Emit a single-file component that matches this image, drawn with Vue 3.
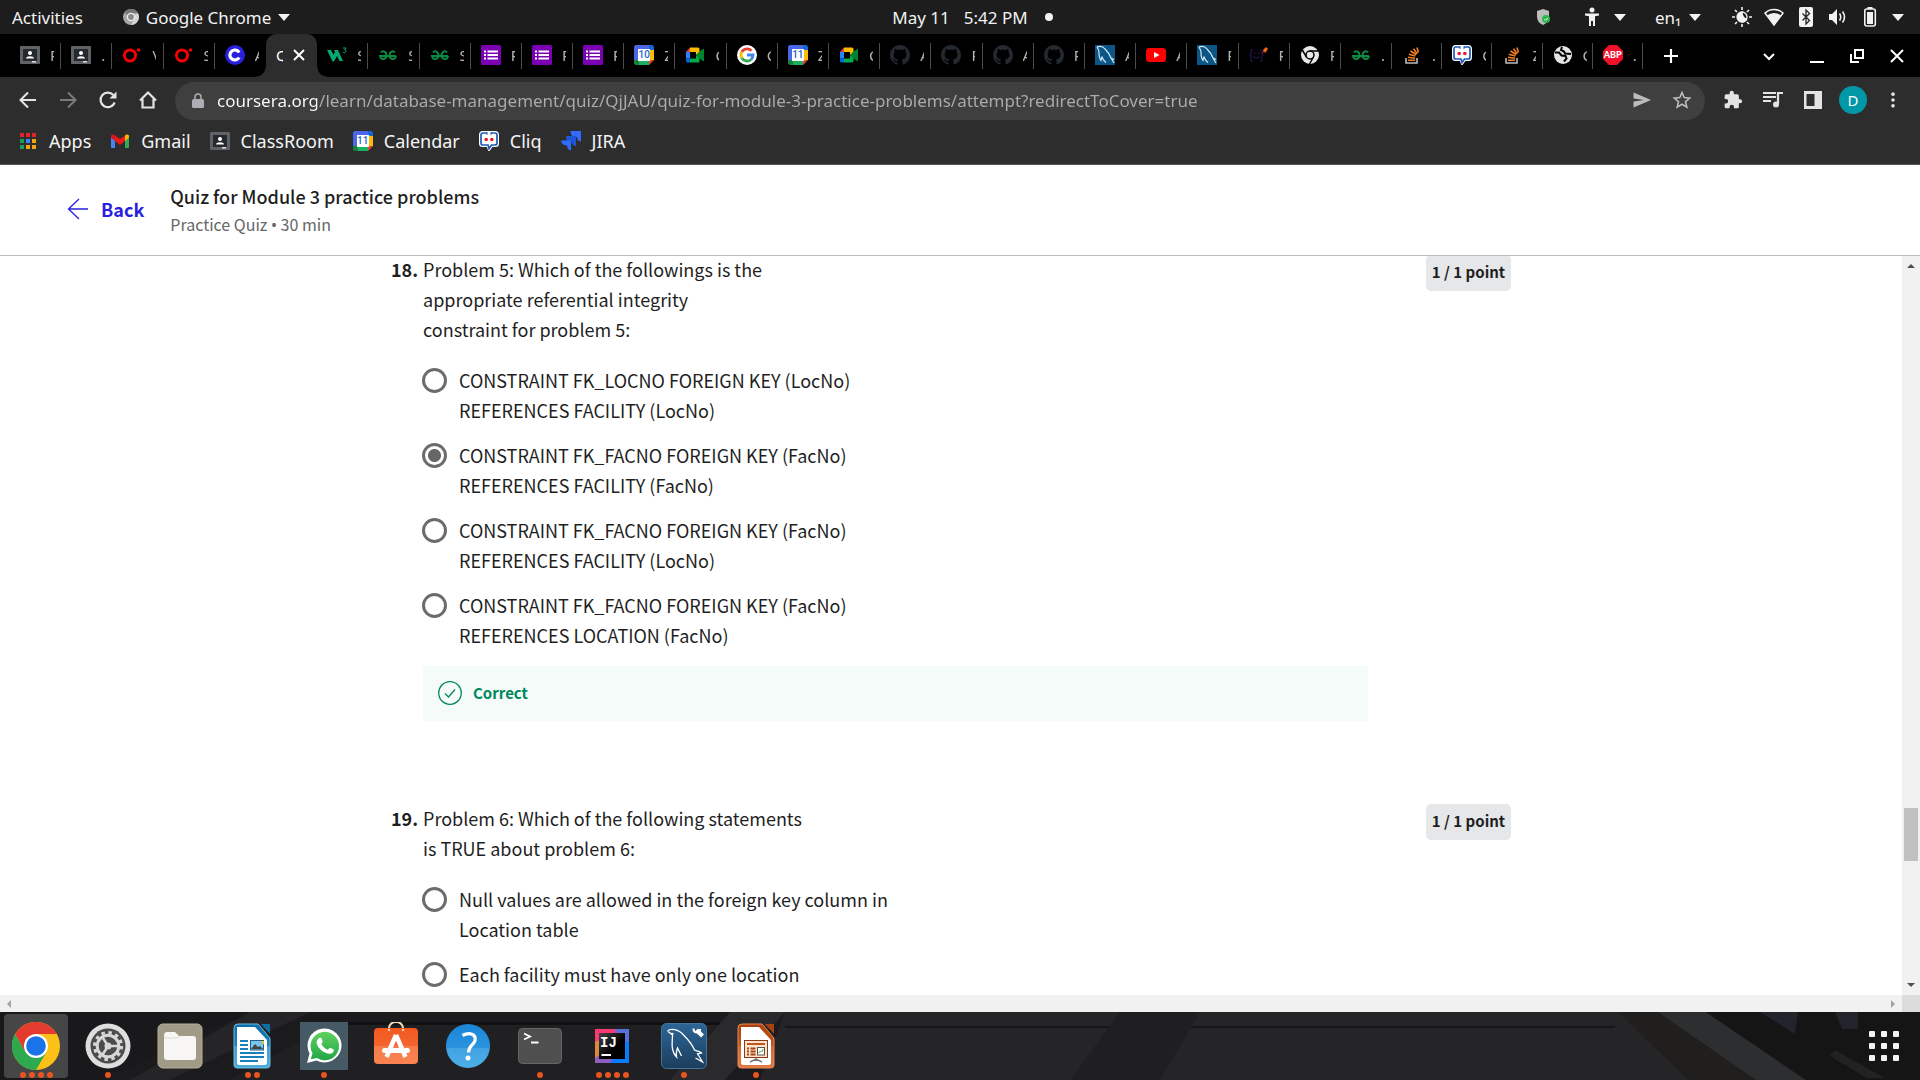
<script setup>
import { ref } from 'vue'

const tabs = [
  { icon: 'classroom', title: 'P' },
  { icon: 'classroom', title: '.' },
  { icon: 'oracle', title: 'V' },
  { icon: 'oracle', title: 'S' },
  { icon: 'coursera', title: 'A' },
  { title: 'Quiz', active: true },
  { icon: 'w3', title: 'S' },
  { icon: 'gfg', title: 'S' },
  { icon: 'gfg', title: 'S' },
  { icon: 'forms', title: 'P' },
  { icon: 'forms', title: 'P' },
  { icon: 'forms', title: 'P' },
  { icon: 'cal10', title: 'Z' },
  { icon: 'meet', title: 'C' },
  { icon: 'google', title: 'C' },
  { icon: 'cal11', title: 'Z' },
  { icon: 'meet', title: 'C' },
  { icon: 'github', title: 'A' },
  { icon: 'github', title: 'P' },
  { icon: 'github', title: 'A' },
  { icon: 'github', title: 'P' },
  { icon: 'mysql', title: 'A' },
  { icon: 'youtube', title: 'A' },
  { icon: 'mysql', title: 'P' },
  { icon: 'smile', title: 'P' },
  { icon: 'chromegray', title: 'P' },
  { icon: 'gfg', title: '.' },
  { icon: 'stack', title: '.', narrow: true },
  { icon: 'cliq', title: 'C', narrow: true },
  { icon: 'stack', title: 'Z', narrow: true },
  { icon: 'globe', title: 'C', narrow: true },
  { icon: 'abp', title: '.', narrow: true }
]

const bookmarks = [
  { icon: 'apps', label: 'Apps' },
  { icon: 'gmail', label: 'Gmail' },
  { icon: 'classroom', label: 'ClassRoom' },
  { icon: 'cal11', label: 'Calendar' },
  { icon: 'cliq', label: 'Cliq' },
  { icon: 'jira', label: 'JIRA' }
]

// Lettering laid over an icon's shape
const lettering = { cal10: '10', cal11: '11', abp: 'ABP', intellij: 'IJ' }

const dock = [
  { icon: 'chrome', name: 'Google Chrome', windows: 4, active: true },
  { icon: 'settings', name: 'Settings', windows: 1 },
  { icon: 'files', name: 'Files', windows: 0 },
  { icon: 'writer', name: 'LibreOffice Writer', windows: 2 },
  { icon: 'whatsapp', name: 'WhatsApp', windows: 1 },
  { icon: 'software', name: 'Ubuntu Software', windows: 0 },
  { icon: 'help', name: 'Help', windows: 0 },
  { icon: 'terminal', name: 'Terminal', windows: 1 },
  { icon: 'intellij', name: 'IntelliJ IDEA', windows: 4 },
  { icon: 'workbench', name: 'MySQL Workbench', windows: 1 },
  { icon: 'impress', name: 'LibreOffice Impress', windows: 1 }
]

const url = ref('coursera.org/learn/database-management/quiz/QjJAU/quiz-for-module-3-practice-problems/attempt?redirectToCover=true')

const questions = ref([
  {
    number: 18,
    text: 'Problem 5: Which of the followings is the\nappropriate referential integrity\nconstraint for problem 5:',
    points: '1 / 1 point',
    answer: 1,
    correct: true,
    options: [
      'CONSTRAINT FK_LOCNO FOREIGN KEY (LocNo)\nREFERENCES FACILITY (LocNo)',
      'CONSTRAINT FK_FACNO FOREIGN KEY (FacNo)\nREFERENCES FACILITY (FacNo)',
      'CONSTRAINT FK_FACNO FOREIGN KEY (FacNo)\nREFERENCES FACILITY (LocNo)',
      'CONSTRAINT FK_FACNO FOREIGN KEY (FacNo)\nREFERENCES LOCATION (FacNo)'
    ]
  },
  {
    number: 19,
    text: 'Problem 6: Which of the following statements\nis TRUE about problem 6:',
    points: '1 / 1 point',
    answer: null,
    correct: false,
    options: [
      'Null values are allowed in the foreign key column in\nLocation table',
      'Each facility must have only one location'
    ]
  }
])
</script>

<template>
  <div class="desktop">
    <svg class="sprite" aria-hidden="true">
      <defs>
        <linearGradient id="g-writer" x1="0" y1="0" x2="0" y2="1"><stop offset="0" stop-color="#0f6ea8" /><stop offset=".5" stop-color="#1b7fbc" /><stop offset=".5" stop-color="#3f9fd3" /><stop offset="1" stop-color="#4fabdb" /></linearGradient>
        <linearGradient id="g-impress" x1="0" y1="0" x2="0" y2="1"><stop offset="0" stop-color="#a8430f" /><stop offset=".5" stop-color="#c4531a" /><stop offset=".5" stop-color="#d9662b" /><stop offset="1" stop-color="#e27a45" /></linearGradient>
        <linearGradient id="g-help" x1="0" y1="0" x2="0" y2="1"><stop offset="0" stop-color="#1a86d9" /><stop offset=".54" stop-color="#2b93df" /><stop offset=".54" stop-color="#41a2e3" /><stop offset="1" stop-color="#4dafe8" /></linearGradient>
        <linearGradient id="g-soft" x1="0" y1="0" x2="0" y2="1"><stop offset="0" stop-color="#f2581f" /><stop offset=".5" stop-color="#f4652f" /><stop offset=".5" stop-color="#f77b4a" /><stop offset="1" stop-color="#f98352" /></linearGradient>
        <linearGradient id="g-wa" x1="0" y1="0" x2="0" y2="1"><stop offset="0" stop-color="#5fd15f" /><stop offset="1" stop-color="#22a648" /></linearGradient>
        <linearGradient id="g-wb" x1="0" y1="0" x2="0" y2="1"><stop offset="0" stop-color="#2c6597" /><stop offset="1" stop-color="#1c3e5c" /></linearGradient>
        <linearGradient id="g-ij" x1="0" y1="0" x2="1" y2="1"><stop offset="0" stop-color="#444" /><stop offset=".6" stop-color="#000" /></linearGradient>
      </defs>

      <symbol id="i-classroom" viewBox="0 0 20 20"><rect y="1" width="20" height="18" rx="1" fill="#5f6368" /><rect x="3" y="4" width="14" height="12" fill="#25292e" /><circle cx="10" cy="8" r="2" fill="#fff" /><path d="M6 13.500c0-3 8-3 8 0z" fill="#fff" /><path d="M12 16h4v1.500h-4z" fill="#ddd" /></symbol>
      <symbol id="i-oracle" viewBox="0 0 20 20"><circle cx="8" cy="10.500" r="5.500" fill="none" stroke="#f80000" stroke-width="3" /><circle cx="16.500" cy="5" r="1.800" fill="#f80000" /></symbol>
      <symbol id="i-coursera" viewBox="0 0 20 20"><circle cx="10" cy="10" r="10" fill="#2a1fe0" /><path d="M14.200 7.500a5 5 0 1 0 0 5" fill="none" stroke="#fff" stroke-width="3.200" /></symbol>
      <symbol id="i-w3" viewBox="0 0 20 20"><path d="M0 5h4l2.500 5L8 7 7 5h4l5 11h-3.500L10 11l-3 5.500H5.500z" fill="#04aa6d" /><path d="M16 3h3l-1.300 2c2 0 1.600 2.600-.3 2.600-.7 0-1.200-.2-1.500-.6" fill="none" stroke="#04aa6d" /></symbol>
      <symbol id="i-gfg" viewBox="0 0 20 20"><g fill="none" stroke="#0a8a43" stroke-width="2"><path d="M3 7.500c2-2.500 5.500-1 5.500 3s-6 5-6.500.5h16M17 7.500c-2-2.500-5.500-1-5.500 3s6 5 6.500.5" /></g></symbol>
      <symbol id="i-forms" viewBox="0 0 20 20"><rect width="20" height="20" rx="1.500" fill="#7b00b4" /><path d="M3 5.500h2v2H3zm3.500 0H17v2H6.500zM3 9h2v2H3zm3.500 0H17v2H6.500zM3 12.500h2v2H3zm3.500 0H17v2H6.500z" fill="#fff" /></symbol>
      <symbol id="i-calbase" viewBox="0 0 20 20"><path d="M1.500 0H15v5H5v10H0V1.500z" fill="#4a67e8" /><path d="M15 0h3.500L20 1.500V5h-5z" fill="#1967d2" /><path d="M15 5h5v10h-5z" fill="#fbbc04" /><path d="M5 15h10v5H5z" fill="#19b060" /><path d="M0 15h5v5H1.500L0 18.500z" fill="#188038" /><path d="M15 15h5l-5 5z" fill="#ea4335" /><path d="M4 4h12v12H4z" fill="#fff" /></symbol>
      <symbol id="i-cal10" viewBox="0 0 20 20"><use href="#i-calbase" /></symbol>
      <symbol id="i-cal11" viewBox="0 0 20 20"><use href="#i-calbase" /></symbol>
      <symbol id="i-meet" viewBox="0 0 20 20"><path d="M5 2.500V7H1z" fill="#ea4335" /><path d="M1 7h4v6.500H1z" fill="#2684fc" /><path d="M1 13.500h4v4H2.500q-1.500 0-1.500-1.500z" fill="#0066da" /><path d="M5 2.500h8q1.500 0 1.500 1.500v4L11 10V7H5z" fill="#ffba00" /><path d="M5 13.500h6V10l3.500 2v4q0 1.500-1.500 1.500H5z" fill="#00ac47" /><path d="M11 10l3.500-3.500L18 4q1-.6 1 .5v11q0 1-1 .4l-3.500-2.500z" fill="#00832d" /></symbol>
      <symbol id="i-google" viewBox="0 0 20 20"><circle cx="10" cy="10" r="10" fill="#fff" /><g fill="none" stroke-width="2.800"><path d="M14.500 5.800A6 6 0 0 0 4.800 7" stroke="#ea4335" /><path d="M4.800 7a6 6 0 0 0 0 6" stroke="#fbbc05" /><path d="M4.800 13a6 6 0 0 0 9.300 1.400" stroke="#34a853" /><path d="M14.100 14.400A6 6 0 0 0 16 10h-6" stroke="#4285f4" /></g></symbol>
      <symbol id="i-github" viewBox="0 0 16 16"><path fill="#24292f" d="M8 0C3.580 0 0 3.580 0 8c0 3.540 2.290 6.530 5.470 7.590.4.070.55-.17.55-.38 0-.19-.01-.82-.01-1.490-2.010.37-2.530-.49-2.690-.94-.09-.23-.48-.94-.82-1.130-.28-.15-.68-.52-.01-.53.63-.01 1.080.58 1.230.82.72 1.210 1.870.87 2.330.66.07-.52.28-.87.51-1.070-1.780-.2-3.640-.89-3.640-3.950 0-.87.31-1.590.82-2.150-.08-.2-.36-1.020.08-2.120 0 0 .67-.21 2.200.82.64-.18 1.320-.27 2-.27s1.360.09 2 .27c1.530-1.040 2.200-.82 2.200-.82.44 1.100.16 1.920.08 2.120.51.56.82 1.270.82 2.150 0 3.070-1.870 3.750-3.650 3.950.29.25.54.73.54 1.480 0 1.070-.01 1.930-.01 2.200 0 .21.15.46.55.38A8.010 8.010 0 0 0 16 8c0-4.420-3.580-8-8-8z" /></symbol>
      <symbol id="i-mysql" viewBox="0 0 20 20"><rect width="20" height="20" fill="#0a5687" /><path d="M2 2c3-1 6-.5 8 2 3 3 5 6 6 9l3 1.500M16 13l3 5M2 2c1 2 2 3 2 5 0 3 0 6 2 8.500.5-1.500.5-3 1-3.500 1 2.500 2 4 4 5.500" fill="none" stroke="#d8e8f2" stroke-width="1.200" /></symbol>
      <symbol id="i-youtube" viewBox="0 0 20 20"><rect y="3" width="20" height="14" rx="3.500" fill="#f00" /><path d="M8 7l5.500 3L8 13z" fill="#fff" /></symbol>
      <symbol id="i-smile" viewBox="0 0 20 20"><path d="M4 5H2v4l-1 1 1 1v5h2M11 5h2v4l1 1-1 1v5h-2M5.500 7v2M9.500 7v2M4.500 11c1 3 5 3 6 0" fill="none" stroke="#1b0f3a" stroke-width="1.600" /><path d="M14 5l3-3 2 2-3 4z" fill="#f06a12" /><path d="M13 8l2-2" stroke="#b33" /></symbol>
      <symbol id="i-chromegray" viewBox="0 0 20 20"><circle cx="10" cy="10" r="9" fill="#e8e8e8" /><circle cx="10" cy="10" r="4" fill="none" stroke="#000" stroke-width="1.500" /><path d="M10 6h8.500M6.500 12L2.300 5M13.500 12l-4 7" stroke="#000" stroke-width="1.500" /></symbol>
      <symbol id="i-chromemini" viewBox="0 0 20 20"><circle cx="10" cy="10" r="10" fill="#a5a5a5" /><path d="M10 0a10 10 0 0 1 8.700 5H10a5 5 0 0 0-4.300 2.500L2 4.500A10 10 0 0 1 10 0z" fill="#777" /><path d="M19 6a10 10 0 0 1-9 14l4.300-7.500A5 5 0 0 0 14 7z" fill="#d5d5d5" /><circle cx="10" cy="10" r="4.500" fill="#888" stroke="#eee" stroke-width="1.800" /></symbol>
      <symbol id="i-stack" viewBox="0 0 20 20"><path d="M4 13v5h11v-5" fill="none" stroke="#bcbbbb" stroke-width="1.600" /><path d="M6 15.300h7M6 12.300l7 .9M6.800 9.200l6.600 1.900M8.500 6l5.700 3.500M11.500 3.800l3.800 4.900M15 2.500l1.400 5" stroke="#f48024" stroke-width="1.600" /></symbol>
      <symbol id="i-cliq" viewBox="0 0 20 20"><path d="M3.500 1h13A2.500 2.500 0 0 1 19 3.500v9a2.500 2.500 0 0 1-2.500 2.500H13l-3 4-1.500-4h-5A2.500 2.500 0 0 1 1 12.500v-9A2.500 2.500 0 0 1 3.500 1z" fill="#fff" stroke="#fff" stroke-width="2" /><path d="M8 2H4a2 2 0 0 0-2 2v8a2 2 0 0 0 2 2h5l1 3.500 2.500-3.500H16a2 2 0 0 0 2-2V4a2 2 0 0 0-2-2h-4" fill="none" stroke="#1d5bb5" stroke-width="1.700" /><path d="M8 1v3M12 1v3" stroke="#1d5bb5" /><circle cx="7.200" cy="8.500" r="1.800" fill="#e8192c" /><circle cx="12.800" cy="8.500" r="1.800" fill="#e8192c" /></symbol>
      <symbol id="i-globe" viewBox="0 0 20 20"><circle cx="10" cy="10" r="9" fill="#e4e4e4" /><path d="M2 7.500h4l2.500 3 4 .5 1 2.500-2.500 3M9 2l-1 3 3 1.500 1 2 6 .5" fill="none" stroke="#000" stroke-width="2" /></symbol>
      <symbol id="i-abp" viewBox="0 0 20 20"><path d="M6 0h8l6 6v8l-6 6H6l-6-6V6z" fill="#f4102b" /></symbol>

      <symbol id="i-apps" viewBox="0 0 20 20"><path d="M2 2h4v4H2zM8 2h4v4H8zM14 2h4v4h-4z" fill="#ea2127" /><path d="M2 8h4v4H2zM2 14h4v4H2z" fill="#16a05a" /><path d="M8 8h4v4H8z" fill="#3b82f6" /><path d="M14 8h4v4h-4zM8 14h4v4H8zM14 14h4v4h-4z" fill="#f2a60d" /></symbol>
      <symbol id="i-gmail" viewBox="0 0 20 20"><path d="M1 6l4 3v8H2q-1 0-1-1z" fill="#4285f4" /><path d="M15 9l4-3v10q0 1-1 1h-3z" fill="#34a853" /><path d="M15 4.500l1.500-1Q19 3 19 5v1.500L15 10z" fill="#fbbc04" /><path d="M5 10l5 4 5-4V4.500L10 8 5 4.500z" fill="#f01818" /><path d="M1 6.500V5q0-2 2.500-1.500L5 4.500V10z" fill="#d81818" /></symbol>
      <symbol id="i-jira" viewBox="0 0 20 20"><path d="M9.500 0H20v10.500q-4-.5-4-4.500h-2q-4 0-4.500-6z" fill="#2f6bff" /><path d="M5 5h10v10q-4 0-4-4H9Q5 11 5 5z" fill="#1e55d8" /><path d="M0 9.500h10v10q-3.500-.5-4-5-5 0-6-5z" fill="#2f6bff" /></symbol>

      <symbol id="i-back" viewBox="0 0 20 20"><path d="M18 10H3M10 2.500L2.500 10l7.500 7.500" fill="none" stroke="currentColor" stroke-width="2" /></symbol>
      <symbol id="i-forward" viewBox="0 0 20 20"><path d="M2 10h15M10 2.500l7.500 7.500-7.500 7.500" fill="none" stroke="currentColor" stroke-width="2" /></symbol>
      <symbol id="i-reload" viewBox="0 0 20 20"><path d="M16.700 12.500A7.300 7.300 0 1 1 15.300 5" fill="none" stroke="currentColor" stroke-width="2.200" /><path d="M18.500 1.500v7h-7z" fill="currentColor" /></symbol>
      <symbol id="i-home" viewBox="0 0 20 20"><path d="M2 10.500l8-8 8 8M4.500 9v8.500h11V9" fill="none" stroke="currentColor" stroke-width="2.200" /></symbol>
      <symbol id="i-lock" viewBox="0 0 12 16"><path d="M1.500 6h9Q12 6 12 7.500v6q0 1.500-1.500 1.500h-9Q0 15 0 13.500v-6Q0 6 1.500 6z" fill="currentColor" /><path d="M3 7V4a3 3 0 0 1 6 0v3" fill="none" stroke="currentColor" stroke-width="1.500" /></symbol>
      <symbol id="i-send" viewBox="0 0 20 20"><path d="M1.500 2.500L19 10 1.500 17.500v-6L12 10 1.500 8.500z" fill="currentColor" /></symbol>
      <symbol id="i-star" viewBox="0 0 20 20"><path d="M10 2.500l2.200 5.100 5.500.5-4.200 3.600 1.300 5.400L10 14.200l-4.800 2.900 1.300-5.400-4.200-3.600 5.500-.5z" fill="none" stroke="currentColor" stroke-width="1.600" /></symbol>
      <symbol id="i-puzzle" viewBox="0 0 24 24"><path fill="currentColor" d="M20.500 11H19V7c0-1.100-.9-2-2-2h-4V3.500a2.500 2.500 0 0 0-5 0V5H4c-1.100 0-2 .9-2 2v3.800h1.500a2.700 2.700 0 0 1 0 5.400H2V20c0 1.100.9 2 2 2h3.800v-1.500a2.700 2.700 0 0 1 5.400 0V22H17c1.100 0 2-.9 2-2v-4h1.500a2.500 2.500 0 0 0 0-5z" /></symbol>
      <symbol id="i-playlist" viewBox="0 0 20 20"><path d="M0 3h13M0 7h13M0 11h8" stroke="currentColor" stroke-width="2" /><path d="M15 14V3h5" fill="none" stroke="currentColor" stroke-width="2.200" /><circle cx="13" cy="14.500" r="3" fill="currentColor" /></symbol>
      <symbol id="i-panel" viewBox="0 0 20 20"><path d="M1 1h18v18H1zM3.500 4v12h8V4z" fill-rule="evenodd" fill="currentColor" /></symbol>
      <symbol id="i-dots" viewBox="0 0 20 20"><g fill="currentColor"><circle cx="10" cy="3.500" r="2" /><circle cx="10" cy="10" r="2" /><circle cx="10" cy="16.500" r="2" /></g></symbol>
      <symbol id="i-plus" viewBox="0 0 20 20"><path d="M10 3v14M3 10h14" stroke="currentColor" stroke-width="2.200" /></symbol>
      <symbol id="i-close" viewBox="0 0 20 20"><path d="M5 5l10 10M15 5L5 15" stroke="currentColor" stroke-width="2" /></symbol>
      <symbol id="i-chev" viewBox="0 0 20 20"><path d="M5 8l5 5 5-5" fill="none" stroke="currentColor" stroke-width="2" /></symbol>
      <symbol id="i-min" viewBox="0 0 20 20"><path d="M3 16h14" stroke="currentColor" stroke-width="2" /></symbol>
      <symbol id="i-max" viewBox="0 0 20 20"><path d="M8 4h8v8H8zM4 8v8h8" fill="none" stroke="currentColor" stroke-width="2" /></symbol>
      <symbol id="i-x" viewBox="0 0 20 20"><path d="M4 4l12 12M16 4L4 16" stroke="currentColor" stroke-width="2" /></symbol>
      <symbol id="i-tri" viewBox="0 0 12 8"><path d="M0 1h12L6 8z" fill="currentColor" /></symbol>

      <symbol id="i-shield" viewBox="0 0 20 20"><path d="M10 2l6 2v6q0 5-6 8-6-3-6-8V4z" fill="#bdbdbd" /><circle cx="13" cy="12" r="4" fill="#2db84b" /><path d="M11.300 12l1.300 1.300 2.400-2.400" fill="none" stroke="#fff" /></symbol>
      <symbol id="i-a11y" viewBox="0 0 20 20"><circle cx="10" cy="3" r="2.500" fill="currentColor" /><path d="M3 6.500h14v2l-4 .8V19h-2v-5H9v5H7V9.300L3 8.500z" fill="currentColor" /></symbol>
      <symbol id="i-night" viewBox="0 0 20 20"><path d="M10 0v3M10 17v3M0 10h3M17 10h3M3 3l2 2M15 15l2 2M3 17l2-2M15 5l2-2" stroke="currentColor" stroke-width="1.600" /><circle cx="10" cy="10" r="5" fill="none" stroke="currentColor" stroke-width="1.300" /><path d="M11 4.500a5.500 5.500 0 1 0 4.500 7.500A6 6 0 0 1 11 4.500z" fill="currentColor" /></symbol>
      <symbol id="i-wifi" viewBox="0 0 20 20"><path d="M1 6a13 13 0 0 1 18 0l-9 12z" fill="none" stroke="currentColor" stroke-width="1.500" /><path d="M3 8.500a11 11 0 0 1 14 0L10 18z" fill="currentColor" /></symbol>
      <symbol id="i-bt" viewBox="0 0 20 20"><rect x="3" width="14" height="20" rx="2" fill="currentColor" /><path d="M6.500 6.500l7 7L10 17V3l3.500 3.500-7 7" fill="none" stroke="#222" stroke-width="1.300" /></symbol>
      <symbol id="i-vol" viewBox="0 0 20 20"><path d="M1 7h3l5-5v16l-5-5H1z" fill="currentColor" /><path d="M11.500 6.500q2.500 3.500 0 7M14.500 4.500q4 5.500 0 11" fill="none" stroke="currentColor" stroke-width="1.600" /></symbol>
      <symbol id="i-bat" viewBox="0 0 20 20"><path d="M7.500 0h5v2h-5z" fill="currentColor" /><rect x="4.800" y="2" width="10.500" height="17" rx="2" fill="none" stroke="currentColor" stroke-width="1.600" /><path d="M7 5h6v12H7z" fill="currentColor" /></symbol>

      <symbol id="i-chrome" viewBox="0 0 48 48"><circle cx="24" cy="24" r="24" fill="#fbc116" /><path d="M3.200 12A24 24 0 0 0 24 48l10.400-18L24 24l-10.400 6z" fill="#2da94f" /><path d="M3.200 12L13.600 30 24 24V12h20.800A24 24 0 0 0 3.200 12z" fill="#e33b2e" /><circle cx="24" cy="24" r="12" fill="#fff" /><circle cx="24" cy="24" r="9.800" fill="#1a73e8" /></symbol>
      <symbol id="i-settings" viewBox="0 0 48 48"><circle cx="24" cy="24" r="22.500" fill="#dedede" /><circle cx="24" cy="24" r="17.500" fill="#4c4c4c" /><circle cx="24" cy="24" r="13.500" fill="none" stroke="#d8d8d8" stroke-width="3" stroke-dasharray="3.500 3.568" /><circle cx="24" cy="24" r="10.800" fill="none" stroke="#d8d8d8" stroke-width="3" /><circle cx="24" cy="24" r="3.500" fill="#d8d8d8" /><path d="M24 24h11M24 24l-6-9.500M24 24l-6 9.500" stroke="#d8d8d8" stroke-width="2.500" /></symbol>
      <symbol id="i-files" viewBox="0 0 48 48"><rect x="2" y="2" width="44" height="44" rx="5" fill="#a09a86" stroke="#b5af9b" /><path d="M8 14q0-4 3-4h8l4 4h14q3 0 3 3v18q0 3-3 3H11q-3 0-3-3z" fill="#f7f6f4" /><path d="M8 16h13l3-2" stroke="#dedbd2" fill="none" /></symbol>
      <symbol id="i-writer" viewBox="0 0 48 48"><path d="M10 2h20l12 14v27q0 3-3 3H9q-3 0-3-3V6q0-4 4-4z" fill="url(#g-writer)" stroke="#6bbce6" /><path d="M33 2h9v10z" fill="#0f6ea8" /><path d="M9 5h18l12 13v22q0 3-2 3H11q-2 0-2-3z" fill="#fff" /><path d="M12 19h8M12 23h8M12 27h8M12 31h24M12 35h24M12 39h18" stroke="#1b7fbc" stroke-width="2" /><rect x="22.500" y="18.500" width="13" height="9.500" fill="#7cc4ea" stroke="#1d5f8a" /><path d="M23 27l4-5 3 3 2-1 3 3z" fill="#444" /><path d="M33 19h3v4z" fill="#f6c016" /></symbol>
      <symbol id="i-whatsapp" viewBox="0 0 48 48"><path d="M0 0h48v48H0z" fill="#455a64" /><path d="M7 41l2.500-9.500A17 17 0 1 1 16.500 38.500z" fill="#fff" /><path d="M10.800 37.300l1.700-6A14.300 14.300 0 1 1 17 36z" fill="url(#g-wa)" /><path d="M19 16c1-1 2-.5 2.500.5l1.200 3c.2 1-1.500 2-1.200 2.800 1.500 2.700 3.500 4.400 6 5.500 1 0 1.800-2.300 2.800-2l3 1.500c1 .6.500 2-.2 2.900-1.600 1.700-4 2-6.300 1.100-5-1.800-8.500-5.300-10-9.300-.7-2.200.4-4.600 2.200-6z" fill="#fff" /></symbol>
      <symbol id="i-software" viewBox="0 0 48 48"><path d="M17 9V6a7 6 0 0 1 14 0v3" fill="none" stroke="#f4dcb4" stroke-width="2.200" /><rect x="2" y="6" width="44" height="36" rx="4" fill="url(#g-soft)" /><path d="M17 9V7M31 9V7" stroke="#f4dcb4" stroke-width="2.200" /><path d="M24 13L14.500 35M24 13l9.500 22" stroke="#fff" stroke-width="4.500" /><rect x="10" y="26" width="28" height="5" rx="2.500" fill="#fff" /></symbol>
      <symbol id="i-help" viewBox="0 0 48 48"><circle cx="24" cy="24" r="22" fill="url(#g-help)" /><path d="M18.500 13.500c7-4 14-1 12.500 5-1.500 5-6.500 5.500-6.500 12" fill="none" stroke="#fff" stroke-width="3.200" /><circle cx="24" cy="36" r="2.500" fill="#fff" /></symbol>
      <symbol id="i-terminal" viewBox="0 0 48 48"><rect x="2.500" y="6.500" width="43" height="35" rx="4" fill="#4f4f4f" stroke="#666" /><path d="M8 11.500l6 3-6 3M15 20.500h7.500" fill="none" stroke="#fff" stroke-width="1.800" /></symbol>
      <symbol id="i-intellij" viewBox="0 0 48 48"><path d="M7 7h34v34H7z" fill="#8d5fc0" /><path d="M7 7h19l2 5L12 24l-5-4z" fill="#fb3a73" /><path d="M7 20l6-2v14l-6 4z" fill="#d88b3f" /><path d="M41 14v27H22l8-10z" fill="#087cfa" /><path d="M28 7h13v12l-6 2z" fill="#5a6fd8" /><rect x="11" y="11" width="26" height="26" fill="url(#g-ij)" /><path d="M13.500 33h9.500" stroke="#fff" stroke-width="2" /></symbol>
      <symbol id="i-workbench" viewBox="0 0 48 48"><rect x="1.500" y="1.500" width="45" height="45" rx="5" fill="url(#g-wb)" stroke="#3f759f" /><path d="M7.500 9c3-3 11-2 16 4 6 6 9 10 11 15 2 1 5 1 7 3l-4 1 2 3 3 5-7-4M7.500 9l5 4c0 5-1 9 0 14s2 6 4 8c-1-4 0-6 1-9l4 8M11.500 11l2 1" fill="none" stroke="#fff" stroke-width="1.300" /><path d="M36.500 8l6 6" stroke="#fff" stroke-width="4" /><path d="M33.500 6.500q0 4 3.500 4t3-3.500" stroke="#fff" stroke-width="2" fill="none" /></symbol>
      <symbol id="i-impress" viewBox="0 0 48 48"><path d="M10 2h20l12 14v27q0 3-3 3H9q-3 0-3-3V6q0-4 4-4z" fill="url(#g-impress)" stroke="#e58a55" /><path d="M33 2h9v10z" fill="#a8430f" /><path d="M9 5h18l12 13v22q0 3-2 3H11q-2 0-2-3z" fill="#fff" /><rect x="12.500" y="18.500" width="23" height="17" fill="#fbe3cf" stroke="#8a3a12" /><path d="M15 22h18" stroke="#c4531a" stroke-width="2" /><path d="M15 26.500h2M15 29.500h2M15 32.500h2M18.500 26.500h5M18.500 29.500h5M18.500 32.500h5" stroke="#a8430f" stroke-width="2" /><rect x="25.500" y="25.500" width="7" height="7.500" fill="#fff" stroke="#555" /><path d="M26.500 31l2-2 1 1 2-3" fill="none" stroke="#3a3" /><path d="M24 36v3M18 40l6-3 6 3" fill="none" stroke="#777" stroke-width="1.500" /></symbol>
    </svg>

    <header class="topbar">
      <div class="top-left">
        <button class="plain">Activities</button>
        <button class="plain app-menu">
          <svg class="s16"><use href="#i-chromemini" /></svg>
          <span>Google Chrome</span>
          <svg class="tri"><use href="#i-tri" /></svg>
        </button>
      </div>
      <button class="plain clock"><span>May 11</span><span>5:42 PM</span><i class="dot"></i></button>
      <div class="top-right">
        <svg class="s20"><use href="#i-shield" /></svg>
        <div class="group"><svg class="s20"><use href="#i-a11y" /></svg><svg class="tri"><use href="#i-tri" /></svg></div>
        <div class="group tight"><span>en₁</span><svg class="tri"><use href="#i-tri" /></svg></div>
        <div class="group">
          <svg class="s20"><use href="#i-night" /></svg>
          <svg class="s20"><use href="#i-wifi" /></svg>
          <svg class="s20"><use href="#i-bt" /></svg>
          <svg class="s20"><use href="#i-vol" /></svg>
          <svg class="s20"><use href="#i-bat" /></svg>
          <svg class="tri"><use href="#i-tri" /></svg>
        </div>
      </div>
    </header>

    <div class="tabstrip">
      <div class="tabs">
        <div v-for="(t, i) in tabs" :key="i" class="tab" :class="{ active: t.active, narrow: t.narrow, bare: tabs[i + 1]?.active }">
          <template v-if="t.active">
            <span class="tab-title">{{ t.title }}</span>
            <button class="plain" aria-label="Close tab"><svg class="s20"><use href="#i-close" /></svg></button>
          </template>
          <template v-else>
            <span class="icon" :class="t.icon"><svg class="s20"><use :href="'#i-' + t.icon" /></svg><b v-if="lettering[t.icon]">{{ lettering[t.icon] }}</b></span>
            <span class="tab-title">{{ t.title }}</span>
          </template>
        </div>
      </div>
      <button class="plain new-tab" aria-label="New tab"><svg class="s20"><use href="#i-plus" /></svg></button>
      <div class="window-controls">
        <button class="plain search" aria-label="Search tabs"><svg class="s20"><use href="#i-chev" /></svg></button>
        <button class="plain" aria-label="Minimize"><svg class="s20"><use href="#i-min" /></svg></button>
        <button class="plain" aria-label="Restore"><svg class="s20"><use href="#i-max" /></svg></button>
        <button class="plain" aria-label="Close window"><svg class="s20"><use href="#i-x" /></svg></button>
      </div>
    </div>

    <div class="toolbar">
      <button class="tool" aria-label="Back"><svg class="s20"><use href="#i-back" /></svg></button>
      <button class="tool dim" aria-label="Forward"><svg class="s20"><use href="#i-forward" /></svg></button>
      <button class="tool" aria-label="Reload"><svg class="s20"><use href="#i-reload" /></svg></button>
      <button class="tool" aria-label="Home"><svg class="s20"><use href="#i-home" /></svg></button>
      <div class="omnibox">
        <svg class="lock"><use href="#i-lock" /></svg>
        <input v-model="url" class="url" type="text" aria-label="Address" spellcheck="false" />
        <button class="tool soft" aria-label="Share"><svg class="s20"><use href="#i-send" /></svg></button>
        <button class="tool soft" aria-label="Bookmark"><svg class="s20"><use href="#i-star" /></svg></button>
      </div>
      <button class="tool" aria-label="Extensions"><svg class="s20"><use href="#i-puzzle" /></svg></button>
      <button class="tool" aria-label="Media"><svg class="s20"><use href="#i-playlist" /></svg></button>
      <button class="tool" aria-label="Side panel"><svg class="s20"><use href="#i-panel" /></svg></button>
      <button class="tool" aria-label="Profile"><span class="avatar">D</span></button>
      <button class="tool" aria-label="Menu"><svg class="s18"><use href="#i-dots" /></svg></button>
    </div>

    <nav class="bookmarks">
      <a v-for="b in bookmarks" :key="b.label" href="#" class="bookmark">
        <span class="icon" :class="b.icon"><svg class="s20"><use :href="'#i-' + b.icon" /></svg><b v-if="lettering[b.icon]">{{ lettering[b.icon] }}</b></span>
        <span>{{ b.label }}</span>
      </a>
    </nav>

    <div class="quiz-head">
      <a href="#" class="back">
        <svg class="s22" viewBox="0 0 22 22"><path d="M21 11H1.500M12 1L1.500 11 12 21" fill="none" stroke="currentColor" stroke-width="1.300" /></svg>
        <span>Back</span>
      </a>
      <div>
        <h1>Quiz for Module 3 practice problems</h1>
        <p>Practice Quiz <span class="bullet">•</span> 30 min</p>
      </div>
    </div>

    <div class="viewport">
      <main class="quiz">
        <section v-for="q in questions" :key="q.number" class="question">
          <b class="number">{{ q.number }}.</b>
          <fieldset class="body">
            <legend class="prompt">{{ q.text }}</legend>
            <div class="options">
              <label v-for="(o, i) in q.options" :key="i" class="option">
                <input v-model="q.answer" type="radio" :name="'q' + q.number" :value="i" />
                <span>{{ o }}</span>
              </label>
            </div>
            <div v-if="q.correct" class="feedback">
              <svg class="s24" viewBox="0 0 24 24"><circle cx="12" cy="12" r="11.300" fill="none" stroke="currentColor" stroke-width="1.300" /><path d="M7 12.500l3.500 3.500L17 8.500" fill="none" stroke="currentColor" stroke-width="1.300" /></svg>
              <span>Correct</span>
            </div>
          </fieldset>
          <div class="points">{{ q.points }}</div>
        </section>
      </main>
      <div class="vbar">
        <svg viewBox="0 0 18 18"><path d="M5 12h8L9 8z" fill="#505050" /></svg>
        <i></i><i class="thumb"></i><i></i>
        <svg viewBox="0 0 18 18"><path d="M5 6h8l-4 4z" fill="#505050" /></svg>
      </div>
    </div>
    <div class="hbar">
      <svg viewBox="0 0 17 17"><path d="M11 5v8L7 9z" fill="#a3a3a3" /></svg>
      <svg viewBox="0 0 17 17"><path d="M6 5v8l4-4z" fill="#a3a3a3" /></svg>
      <i class="corner"></i>
    </div>

    <footer class="dock">
      <svg class="wood" viewBox="0 0 1920 68" preserveAspectRatio="none" aria-hidden="true">
        <rect width="1920" height="68" fill="#1b1b1d" />
        <path d="M0 0h250L100 68H0z" fill="#19191c" />
        <path d="M250 0h60L170 68h-40z" fill="#252528" />
        <path d="M330 12h400l-40 56H230z" fill="#202022" />
        <path d="M330 10h390v3H330z" fill="#111" />
        <path d="M730 0h55l-60 68h-55z" fill="#2a2a2d" />
        <path d="M785 0h840l120 68H760z" fill="#252527" />
        <path d="M785 14h830v2H785z" fill="#171515" />
        <path d="M1120 0h80l-40 68h-90z" fill="#1f1f21" />
        <path d="M1618 0h40l110 68h-80z" fill="#201f1e" />
        <path d="M1658 0h48l100 68h-50z" fill="#2d2e30" />
        <path d="M1706 0h214v68h-114z" fill="#151515" />
        <path d="M1760 0h38l-3 22z" fill="#23242b" />
        <path d="M1835 0h23v17h-16z" fill="#23242b" />
        <path d="M1835 38l50 28h-18l-37-22z" fill="#222223" />
      </svg>
      <button v-for="d in dock" :key="d.name" class="launcher" :class="{ active: d.active }" :aria-label="d.name">
        <span class="icon" :class="d.icon"><svg class="s48"><use :href="'#i-' + d.icon" /></svg><b v-if="lettering[d.icon]">{{ lettering[d.icon] }}</b></span>
        <span class="dots"><i v-for="n in d.windows" :key="n"></i></span>
      </button>
      <button class="app-grid" aria-label="Show applications"><i v-for="n in 9" :key="n"></i></button>
    </footer>
  </div>
</template>

<style>
body { margin: 0; overflow: hidden; }
</style>

<style scoped>
* { box-sizing: border-box; }
.desktop {
  height: 100vh;
  display: flex;
  flex-direction: column;
  overflow: hidden;
  background: #fff;
  color: #1f1f1f;
  font-family: "Noto Sans", "Open Sans", sans-serif;
}
.desktop svg { display: block; flex: none; }
.desktop .sprite { position: absolute; width: 0; height: 0; }
.s16 { width: 16px; height: 16px; }
.s18 { width: 18px; height: 18px; }
.s20 { width: 20px; height: 20px; }
.s22 { width: 22px; height: 22px; }
.s24 { width: 24px; height: 24px; }
.s48 { width: 48px; height: 48px; }
.tri { width: 12px; height: 8px; }
button { font: inherit; color: inherit; border: 0; background: none; padding: 0; }
.plain { display: flex; align-items: center; }

.icon { position: relative; display: block; flex: none; }
.icon b { position: absolute; inset: 0; text-align: center; line-height: 20px; }
.cal10 b, .cal11 b { font-family: Roboto, sans-serif; font-size: 10px; font-weight: 500; color: #1967d2; }
.abp b { font-family: Lato, sans-serif; font-size: 9px; font-weight: 900; color: #fff; }
.intellij b { padding: 11px 0 0 12px; text-align: left; font-family: "Liberation Mono", monospace; font-size: 14px; color: #fff; }

.topbar {
  flex: none;
  height: 34px;
  display: grid;
  grid-template-columns: 1fr auto 1fr;
  align-items: center;
  background: #1d1d1d;
  color: #f2f2f2;
  font-size: 17px;
}
.top-left { display: flex; gap: 40px; padding-left: 12px; }
.app-menu { gap: 7px; }
.clock { gap: 14px; margin-left: 25px; }
.dot { width: 8px; height: 8px; margin-left: 3px; border-radius: 50%; background: #f2f2f2; }
.top-right { display: flex; justify-content: flex-end; align-items: center; gap: 29px; padding-right: 16px; }
.group { display: flex; align-items: center; gap: 12px; }
.group.tight { gap: 8px; margin-right: 2px; }

.tabstrip { flex: none; height: 43px; display: flex; align-items: center; background: #000; color: #fff; padding-left: 10px; }
.tabs { flex: 1; height: 43px; display: flex; min-width: 0; }
.tab { position: relative; flex: 40 1 0; min-width: 0; display: flex; align-items: center; gap: 10px; padding: 0 0 1px 10px; }
.tab.narrow { flex-grow: 39; }
.tab::after { content: ""; position: absolute; right: 0; top: 9px; width: 1px; height: 26px; background: #4a4a4a; }
.tab.bare::after { display: none; }
.tab-title { width: 4px; overflow: hidden; font-size: 15px; line-height: 20px; opacity: .7; }
.tab.active { background: #2d2d2d; border-radius: 10px 10px 0 0; gap: 6px; }
.tab.active .tab-title { width: 7px; opacity: 1; }
.tab.active::before, .tab.active::after {
  content: "";
  position: absolute;
  top: auto;
  bottom: 0;
  width: 10px;
  height: 10px;
}
.tab.active::before { left: -10px; background: radial-gradient(circle at 0 0, #000 9px, #2d2d2d 10px); }
.tab.active::after { right: -10px; background: radial-gradient(circle at 100% 0, #000 9px, #2d2d2d 10px); }
.new-tab { width: 56px; justify-content: center; }
.window-controls { display: flex; padding: 0 3px 0 50px; }
.window-controls button { width: 40px; justify-content: center; }
.window-controls .search { margin-right: 8px; }

.toolbar { flex: none; height: 48px; display: flex; align-items: center; background: #2d2d2d; color: #e4e4e4; padding: 0 7px 0 8px; }
.tool { width: 40px; height: 38px; padding-bottom: 2px; display: flex; align-items: center; justify-content: center; flex: none; }
.tool.dim { color: #7b7b7b; }
.tool.soft { color: #bdbdbd; }
.omnibox { flex: 1; height: 38px; display: flex; align-items: center; margin: 0 8px 0 7px; padding: 0 3px 0 17px; border-radius: 19px; background: #3f3f3f; color: #adadb5; }
.lock { width: 12px; height: 16px; }
.url {
  flex: 1;
  min-width: 0;
  height: 30px;
  margin-left: 13px;
  padding: 0 0 2px;
  border: 0;
  outline: 0;
  font: inherit;
  font-size: 17px;
  color: transparent;
  background: linear-gradient(90deg, #fff 100px, #acacac 100px);
  -webkit-background-clip: text;
  background-clip: text;
}
.avatar { width: 28px; height: 28px; border-radius: 50%; background: #0097a7; color: #fff; font-size: 15px; line-height: 28px; text-align: center; }

.bookmarks { flex: none; height: 40px; display: flex; align-items: center; gap: 19px; background: #2d2d2d; border-bottom: 1px solid #565656; padding: 0 18px 7px; }
.bookmark { display: flex; align-items: center; gap: 11px; color: #f4f4f4; text-decoration: none; font-size: 18px; line-height: 24px; }

.quiz-head, .quiz { font-family: "Noto Sans CJK SC", "Noto Sans", sans-serif; }
.quiz-head { flex: none; height: 91px; display: flex; align-items: center; gap: 26px; padding: 0 0 2px 67px; border-bottom: 1px solid #bbb; }
.back { display: flex; align-items: center; gap: 12px; color: #2a1fe0; text-decoration: none; font-size: 18px; font-weight: 700; line-height: 30px; }
h1, p { margin: 0; }
h1 { font-size: 18px; font-weight: 500; line-height: 30px; }
p { font-size: 16px; line-height: 26px; color: #666; }
.bullet { font-family: "Noto Sans", sans-serif; }

.viewport { flex: 1; min-height: 0; display: flex; overflow: hidden; }
.quiz { flex: 1; min-width: 0; margin-top: -2px; font-size: 18px; line-height: 30px; }
.question { display: flex; align-items: flex-start; max-width: 1120px; margin: 0 auto 82px; }
.number { flex: none; width: 32px; }
.body { flex: 1; min-width: 0; margin: 0; padding: 0; border: 0; }
.prompt { padding: 0; white-space: pre-line; }
.options { display: grid; gap: 15px; padding-top: 21px; }
.option { display: flex; align-items: flex-start; gap: 12px; white-space: pre-line; }
.option input {
  appearance: none;
  flex: none;
  width: 25px;
  height: 25px;
  margin: 3px 0 0 -1px;
  border: 3px solid #6c6c6c;
  border-radius: 50%;
  background: #fff;
}
.option input:checked { background: radial-gradient(circle, #666 6px, #fff 7px); }
.feedback { display: flex; align-items: center; gap: 11px; height: 55px; margin-top: 16px; padding: 0 0 1px 15px; background: #f5fbf9; color: #00885b; font-size: 15px; font-weight: 700; }
.points { flex: none; width: 85px; height: 36px; margin: 1px 0 0 58px; border-radius: 5px; background: #e5e7e8; font-size: 15px; font-weight: 700; line-height: 34px; text-align: center; }

.vbar { flex: none; width: 18px; display: grid; grid-template-rows: 18px 534fr 53px 116fr 18px; background: #f1f1f1; }
.thumb { margin: 0 2px; background: #c1c1c1; }
.hbar { flex: none; height: 17px; display: flex; background: #f1f1f1; }
.hbar svg { width: 17px; }
.hbar svg + svg { margin-left: auto; }
.corner { width: 18px; background: #dcdcdc; }

.dock { position: relative; flex: none; height: 68px; display: flex; gap: 8px; padding: 2px 21px 2px 4px; }
.dock .wood { position: absolute; inset: 0; width: 100%; height: 100%; }
.launcher { position: relative; width: 64px; height: 64px; padding: 8px; border-radius: 4px; }
.launcher.active { background: #464646; }
.dots { position: absolute; left: 0; right: 0; bottom: 0; display: flex; justify-content: center; gap: 3px; }
.dots i { width: 6px; height: 6px; border-radius: 50%; background: #e95420; }
.app-grid { position: relative; margin-left: auto; align-self: center; display: grid; grid-template-columns: repeat(3, 6px); gap: 6px; }
.app-grid i { height: 6px; border-radius: 1px; background: #f2f2f2; }
</style>
